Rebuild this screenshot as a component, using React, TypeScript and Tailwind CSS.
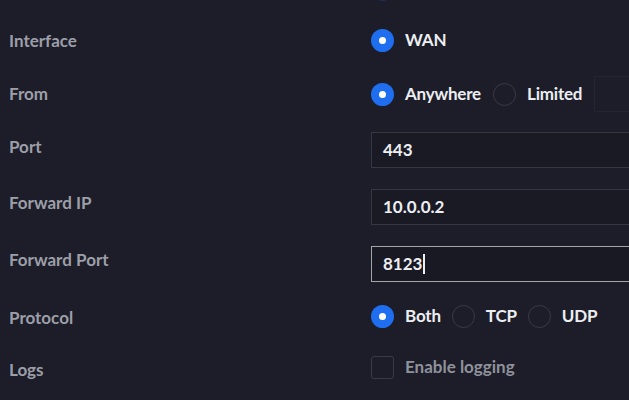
import React from "react";

function Radio({ checked = false }: { checked?: boolean }) {
  if (checked) {
    return (
      <span className="flex h-[23px] w-[23px] shrink-0 items-center justify-center rounded-full bg-[#1f6ef0]">
        <span className="h-[7px] w-[7px] rounded-full bg-white" />
      </span>
    );
  }
  return (
    <span className="h-[23px] w-[23px] shrink-0 rounded-full border-[1.5px] border-[#393a45]" />
  );
}

function Option({ label, checked }: { label: string; checked?: boolean }) {
  return (
    <span className="flex shrink-0 items-center gap-[11px]">
      <Radio checked={checked} />
      <span className="text-[17px] font-bold tracking-[-0.2px] text-[#eceef2]">{label}</span>
    </span>
  );
}

function TextField({ value, focused }: { value: string; focused?: boolean }) {
  return (
    <div
      className={
        focused
          ? "flex h-[36px] w-[320px] shrink-0 items-center border-[1.5px] border-[#a3a5ad] bg-[#181923] px-[11px]"
          : "flex h-[36px] w-[320px] shrink-0 items-center border-[1.5px] border-[#363743] bg-[#191a24] px-[11px]"
      }
    >
      <span className="text-[17px] font-bold text-[#eceef2]">{value}</span>
      {focused && <span className="ml-[1px] h-[20px] w-[1.5px] bg-[#eceef2]" />}
    </div>
  );
}

const labelBase = "w-[371px] shrink-0 pl-[9px] text-[17px] font-bold text-[#9c9fa8]";

export default function App() {
  return (
    <div
      className="h-[400px] w-[629px] overflow-hidden bg-[#1c1d28]"
      style={{ fontFamily: "Lato, 'Open Sans', sans-serif" }}
    >
      <div className="flex h-[14px] items-end pl-[371px]">
        <span className="mb-[13px] h-[23px] w-[23px] shrink-0 rounded-full bg-[#1d3470] opacity-70" />
      </div>

      <div className="flex h-[52px] items-center">
        <span className={`${labelBase} mt-[2px]`}>Interface</span>
        <Option label="WAN" checked />
      </div>

      <div className="flex h-[56px] items-center">
        <span className={labelBase}>From</span>
        <div className="flex shrink-0 items-center gap-[12px]">
          <Option label="Anywhere" checked />
          <Option label="Limited" />
          <span className="h-[36px] w-[50px] shrink-0 border border-[#242531]" />
        </div>
      </div>

      <div className="flex h-[56px] items-center">
        <span className={`${labelBase} mt-[-7px]`}>Port</span>
        <TextField value="443" />
      </div>

      <div className="flex h-[57px] items-center">
        <span className={`${labelBase} mt-[-7px]`}>Forward IP</span>
        <TextField value="10.0.0.2" />
      </div>

      <div className="flex h-[57px] items-center">
        <span className={`${labelBase} mt-[-7px]`}>Forward Port</span>
        <TextField value="8123" focused />
      </div>

      <div className="flex h-[48px] items-center">
        <span className={`${labelBase} mt-[4px]`}>Protocol</span>
        <div className="flex shrink-0 items-center gap-[11px]">
          <Option label="Both" checked />
          <Option label="TCP" />
          <Option label="UDP" />
        </div>
      </div>

      <div className="flex h-[54px] items-center">
        <span className={`${labelBase} mt-[5px]`}>Logs</span>
        <span className="flex shrink-0 items-center gap-[11px]">
          <span className="h-[23px] w-[23px] shrink-0 rounded-[3px] border-[1.5px] border-[#393a45]" />
          <span className="text-[17px] font-bold text-[#8f929b]">Enable logging</span>
        </span>
      </div>
    </div>
  );
}
